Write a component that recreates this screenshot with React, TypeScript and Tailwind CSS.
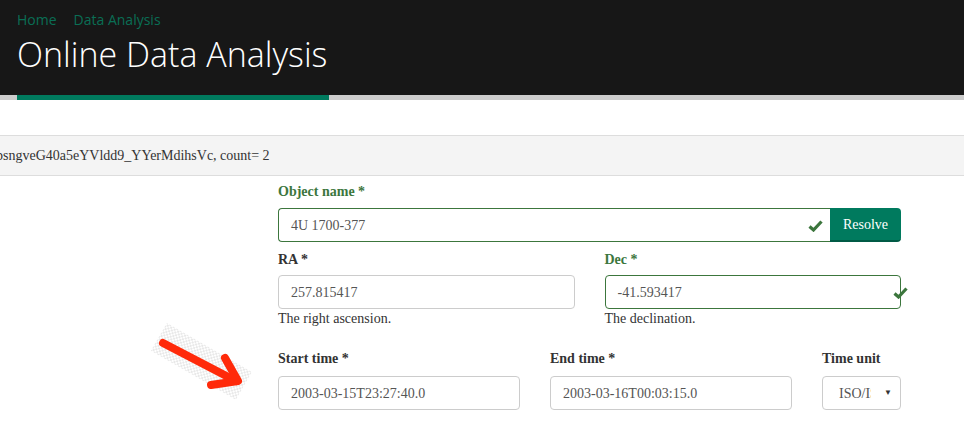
import React from "react";

const Check = ({ className }: { className?: string }) => (
  <svg className={className} width="15" height="12" viewBox="0 0 15 12">
    <path d="M1.5 6.5 L5.5 10 L13.5 1.5" fill="none" stroke="#3c763d" strokeWidth="3.2" strokeLinecap="butt" strokeLinejoin="miter" />
  </svg>
);

const Arrow = () => (
  <svg className="absolute left-[140px] top-[310px]" width="130" height="100" viewBox="140 310 130 100">
    <defs>
      <pattern id="chk" width="4" height="4" patternUnits="userSpaceOnUse">
        <rect width="4" height="4" fill="#ffffff" />
        <rect width="2" height="2" fill="#e4e4e4" />
        <rect x="2" y="2" width="2" height="2" fill="#e4e4e4" />
      </pattern>
    </defs>
    <g transform="rotate(30 201 360)">
      <rect x="153" y="345" width="98" height="32" fill="url(#chk)" opacity="0.85" />
    </g>
    <path d="M163 343 L236 381" stroke="#ff2a0a" strokeWidth="8" strokeLinecap="round" fill="none" />
    <path d="M225 358 L238 381 L211 385" stroke="#ff2a0a" strokeWidth="8" strokeLinecap="round" strokeLinejoin="round" fill="none" />
  </svg>
);

const inputCls =
  "h-[34px] border border-[#ccc] rounded-[4px] pl-[12px] flex items-center text-[14px] text-[#555] bg-white";

export default function App() {
  return (
    <div className="relative w-[964px] h-[422px] overflow-hidden bg-white" style={{ fontFamily: '"Liberation Serif", serif' }}>
      <div className="bg-[#171717] h-[95px] px-[17px] pt-[10px]" style={{ fontFamily: '"Open Sans", sans-serif' }}>
        <div className="flex gap-[17px] text-[14px] leading-[20px] text-[#0a6e55]">
          <span>Home</span>
          <span>Data Analysis</span>
        </div>
        <h1 className="mt-[4px] text-[34px] leading-[40px] font-light text-white">Online Data Analysis</h1>
      </div>
      <div className="h-[5px] bg-[#cccccc]">
        <div className="ml-[17px] w-[312px] h-full bg-[#007a5e]" />
      </div>
      <div className="h-[35px]" />
      <div className="h-[41px] border-y border-[#dddddd] bg-[#f4f4f4] flex items-center overflow-hidden">
        <span className="whitespace-nowrap text-[14px] text-[#333] ml-[-4px]">psngveG40a5eYVldd9_YYerMdihsVc, count= 2</span>
      </div>

      <div className="pl-[278px] pt-[6px]">
        <div className="w-[623px]">
          <label className="block h-[20px] leading-[20px] text-[14px] font-bold text-[#3c763d] mb-[6px]">Object name *</label>
          <div className="flex h-[34px]">
            <div className="flex-1 relative border border-[#3c763d] border-r-0 rounded-l-[4px] pl-[12px] flex items-center text-[14px] text-[#555]">
              4U 1700-377
              <Check className="absolute right-[7px] top-[11px]" />
            </div>
            <div className="w-[71px] bg-[#007a5e] rounded-r-[4px] border-b-2 border-[#005a45] flex items-center justify-center text-[14px] text-white">
              Resolve
            </div>
          </div>

          <div className="grid grid-cols-2 gap-x-[30px] mt-[8px]">
            <div>
              <label className="block h-[20px] leading-[20px] text-[14px] font-bold text-[#333] mb-[5px]">RA *</label>
              <div className={inputCls}>257.815417</div>
              <div className="h-[20px] leading-[20px] text-[14px] text-[#333]">The right ascension.</div>
            </div>
            <div>
              <label className="block h-[20px] leading-[20px] text-[14px] font-bold text-[#3c763d] mb-[5px]">Dec *</label>
              <div className="relative h-[34px] border border-[#3c763d] rounded-[4px] pl-[12px] flex items-center text-[14px] text-[#555]">
                -41.593417
                <Check className="absolute right-[-8px] top-[11px]" />
              </div>
              <div className="h-[20px] leading-[20px] text-[14px] text-[#333]">The declination.</div>
            </div>
          </div>

          <div className="flex gap-x-[30px] mt-[20px]">
            <div className="w-[242px]">
              <label className="block h-[20px] leading-[20px] text-[14px] font-bold text-[#333] mb-[7px]">Start time *</label>
              <div className={inputCls}>2003-03-15T23:27:40.0</div>
            </div>
            <div className="w-[242px]">
              <label className="block h-[20px] leading-[20px] text-[14px] font-bold text-[#333] mb-[7px]">End time *</label>
              <div className={inputCls}>2003-03-16T00:03:15.0</div>
            </div>
            <div className="w-[79px]">
              <label className="block h-[20px] leading-[20px] text-[14px] font-bold text-[#333] mb-[7px] whitespace-nowrap">Time unit</label>
              <div className="h-[34px] border border-[#ccc] rounded-[4px] pl-[16px] pr-[8px] flex items-center text-[14px] text-[#555] bg-white">
                <span className="w-[32px] overflow-hidden whitespace-nowrap">ISO/ISOT</span>
                <span className="ml-auto text-[8px] text-[#333]">▼</span>
              </div>
            </div>
          </div>
        </div>
      </div>
      <Arrow />
    </div>
  );
}
